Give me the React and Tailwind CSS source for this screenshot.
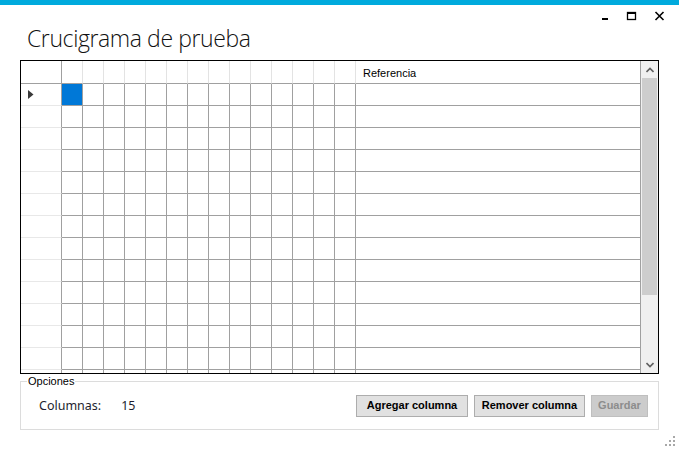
import React from 'react';

const CELLS = 14;
const ROWS = 14;

function WindowControls() {
  return (
    <div className="flex items-start pt-[6px] pr-[14px] gap-[17px]">
      <svg width="8" height="10" viewBox="0 0 8 10">
        <rect x="1" y="7" width="6" height="2" fill="#000" />
      </svg>
      <svg width="11" height="10" viewBox="0 0 11 10">
        <rect x="1.5" y="1.5" width="8" height="7" fill="none" stroke="#000" strokeWidth="1.3" />
        <rect x="1" y="1" width="9" height="2" fill="#000" />
      </svg>
      <svg width="11" height="10" viewBox="0 0 11 10">
        <path d="M1.5 1 L9.5 9 M9.5 1 L1.5 9" stroke="#000" strokeWidth="1.6" />
      </svg>
    </div>
  );
}

function HeaderRow() {
  return (
    <div className="flex h-[23px] shrink-0">
      <div className="w-[41px] border-r border-b border-[#a0a0a0]" />
      {Array.from({ length: CELLS }).map((_, i) => (
        <div key={i} className="w-[21px] border-r border-r-[#e3e3e3] border-b border-b-[#a0a0a0]" />
      ))}
      <div className="w-[285px] border-b border-r border-[#a0a0a0] pl-[7px] pt-[6px] text-[11px] leading-[13px] text-black">
        Referencia
      </div>
    </div>
  );
}

function DataRow({ index }) {
  return (
    <div className="flex h-[22px] shrink-0">
      <div className="w-[41px] border-r border-r-[#a0a0a0] border-b border-b-[#e8e8e8] flex items-center pl-[7px]">
        {index === 0 && (
          <svg width="6" height="9" viewBox="0 0 6 9">
            <path d="M0 0 L5.5 4.5 L0 9 Z" fill="#3a3a3a" />
          </svg>
        )}
      </div>
      {Array.from({ length: CELLS }).map((_, i) => (
        <div
          key={i}
          className={
            'w-[21px] border-r border-b border-[#a0a0a0] ' +
            (index === 0 && i === 0 ? 'bg-[#0078d7]' : 'bg-white')
          }
        />
      ))}
      <div className="w-[285px] border-b border-r border-[#a0a0a0]" />
    </div>
  );
}

function ScrollBar() {
  return (
    <div className="w-[17px] bg-[#f0f0f0] flex flex-col">
      <div className="h-[17px] flex items-center justify-center">
        <svg width="8" height="6" viewBox="0 0 8 6">
          <path d="M0.5 5 L4 1.5 L7.5 5" fill="none" stroke="#606060" strokeWidth="1.6" />
        </svg>
      </div>
      <div className="flex-1 px-[1px]">
        <div className="h-[217px] bg-[#cdcdcd]" />
      </div>
      <div className="h-[17px] flex items-center justify-center">
        <svg width="8" height="6" viewBox="0 0 8 6">
          <path d="M0.5 1 L4 4.5 L7.5 1" fill="none" stroke="#606060" strokeWidth="1.6" />
        </svg>
      </div>
    </div>
  );
}

function ResizeGrip() {
  const dots = [
    [8, 0],
    [4, 4], [8, 4],
    [0, 8], [4, 8], [8, 8],
  ];
  return (
    <svg width="10" height="10" viewBox="0 0 10 10">
      {dots.map(([x, y], i) => (
        <rect key={i} x={x} y={y} width="2" height="2" fill="#a8a8a8" />
      ))}
    </svg>
  );
}

export default function App() {
  const ui = { fontFamily: '"Liberation Sans", Arial, sans-serif' };
  const label = { fontFamily: '"Noto Sans", "Open Sans", sans-serif' };
  return (
    <div className="w-[679px] h-[450px] bg-white overflow-hidden flex flex-col" style={ui}>
      <div className="h-[5px] bg-[#00aadd] shrink-0" />

      <div className="h-[55px] flex justify-between shrink-0">
        <h1
          className="pl-[27px] mt-[19px] text-[23px] leading-[28px] tracking-[-0.4px] font-light text-[#111]"
          style={{ fontFamily: '"Open Sans", "Noto Sans", sans-serif' }}
        >
          Crucigrama de prueba
        </h1>
        <WindowControls />
      </div>

      <div className="ml-[20px] w-[639px] h-[314px] border border-black flex shrink-0">
        <div className="w-[620px] flex flex-col overflow-hidden">
          <HeaderRow />
          {Array.from({ length: ROWS }).map((_, i) => (
            <DataRow key={i} index={i} />
          ))}
        </div>
        <ScrollBar />
      </div>

      <fieldset className="ml-[20px] mt-[1px] w-[639px] h-[55px] border border-[#dcdcdc] px-[18px] shrink-0">
        <legend className="ml-[-12px] px-[1px] text-[11px] leading-[13px] text-black">Opciones</legend>
        <div className="flex items-center h-[30px] mt-[3px]">
          <span className="text-[12.5px] text-[#1e1e2e]" style={label}>
            Columnas:
          </span>
          <span className="ml-[20px] text-[12.5px] text-[#1e1e2e]" style={label}>
            15
          </span>
          <div className="ml-auto flex gap-[6px] mr-[-8px] mt-[-1px]">
            <button className="w-[112px] h-[22px] bg-[#e1e1e1] border border-[#adadad] text-[11px] font-bold text-black">
              Agregar columna
            </button>
            <button className="w-[111px] h-[22px] bg-[#e1e1e1] border border-[#adadad] text-[11px] font-bold text-black">
              Remover columna
            </button>
            <button disabled className="w-[57px] h-[22px] bg-[#cccccc] border border-[#bfbfbf] text-[11px] font-bold text-[#8c8c8c]">
              Guardar
            </button>
          </div>
        </div>
      </fieldset>

      <div className="flex justify-end pr-[4px] pt-[6px]">
        <ResizeGrip />
      </div>
    </div>
  );
}
